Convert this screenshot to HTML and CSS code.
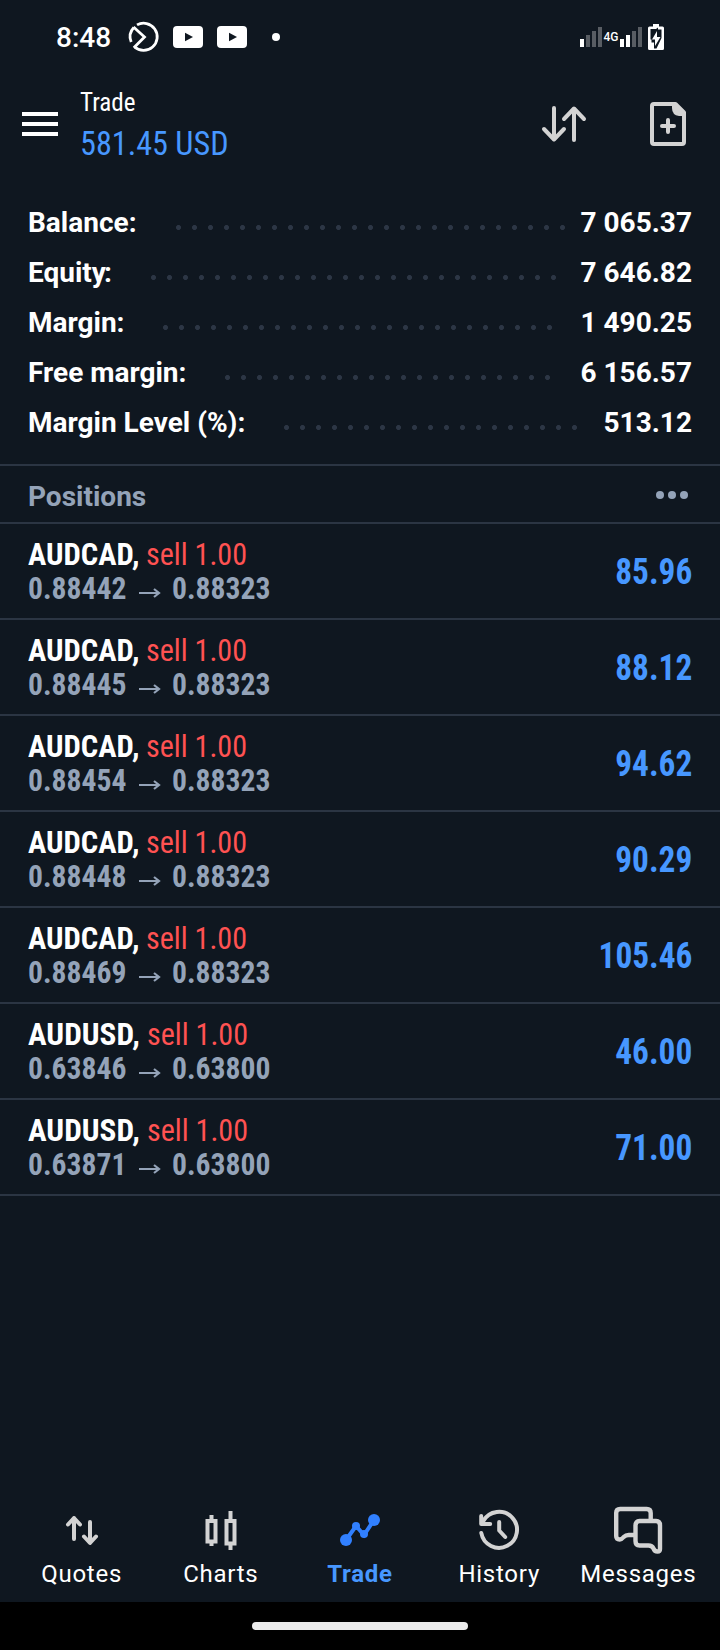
FILE: index.html
```html
<!DOCTYPE html>
<html lang="en">
<head>
<meta charset="utf-8">
<title>Trade</title>
<link rel="stylesheet" href="styles.css">
</head>
<body>
<div class="app">
  <div class="status">
    <span class="clock">8:48</span>
    <svg class="st-circle" width="30" height="30" viewBox="0 0 30 30" fill="none" stroke="#fff" stroke-width="2.8"><path d="M8 2.900A13.600 13.600 0 1 1 5.400 24.800M2.200 20A13.600 13.600 0 0 1 4.800 5.500"/><path d="M4.500 5L15.500 15L4.800 25.800"/></svg>
    <svg class="st-yt" width="30" height="22" viewBox="0 0 30 22"><rect width="30" height="22" rx="4" fill="#fff"/><path d="M12 6.800l8 4.200-8 4.200z" fill="#0f1720"/></svg>
    <svg class="st-yt" width="30" height="22" viewBox="0 0 30 22"><rect width="30" height="22" rx="4" fill="#fff"/><path d="M12 6.800l8 4.200-8 4.200z" fill="#0f1720"/></svg>
    <span class="st-dot"></span>
    <div class="st-right">
      <svg width="22" height="20" viewBox="0 0 22 20" fill="#585d63"><path fill="#fff" d="M0 12h4v8H0z"/><path d="M6 8h4v12H6zM12 4h4v16h-4zM18 0h4v20h-4z"/></svg>
      <span class="net">4G</span>
      <svg width="22" height="20" viewBox="0 0 22 20" fill="#585d63"><path fill="#fff" d="M0 12h4v8H0zM6 8h4v12H6z"/><path d="M12 4h4v16h-4zM18 0h4v20h-4z"/></svg>
      <svg class="batt" width="16" height="26" viewBox="0 0 16 26"><path fill="#fff" d="M5 0h6v2.500h3.500q1.500 0 1.500 1.500v20.500q0 1.500-1.500 1.500h-13q-1.500 0-1.500-1.500V4q0-1.500 1.500-1.500H5z"/><path fill="#0f1720" d="M2.500 5h5.500l2-1.500v2h3.500v8.500L8.500 24.500h-2.500V18.500H3.500v-3H2.500z"/><path fill="#fff" d="M9 7v6h3.500L7 22v-6.500H4z"/></svg>
    </div>
  </div>

  <header class="header">
    <svg class="menu" width="36" height="24" viewBox="0 0 36 24" fill="#fff"><path d="M0 0h36v4H0zM0 10h36v4H0zM0 20h36v4H0z"/></svg>
    <div class="titles">
      <div class="title cond">Trade</div>
      <div class="total cond">581.45 USD</div>
    </div>
    <svg class="sort" width="44" height="36" viewBox="0 0 44 36" fill="none" stroke="#d3d3d3" stroke-width="4" stroke-linecap="round" stroke-linejoin="round"><path d="M12 2v31M2 23l10 10.500L22 23M32 34V3M22 13L32 2.500 42 13"/></svg>
    <svg class="newdoc" width="36" height="44" viewBox="0 0 36 44"><path fill="none" stroke="#d3d3d3" stroke-width="4" stroke-linejoin="round" d="M4 2h21.500L34 10.500V40a2 2 0 0 1-2 2H4a2 2 0 0 1-2-2V4a2 2 0 0 1 2-2z"/><path fill="#d3d3d3" d="M22 2h5l7 7v5h-5q-7-1-7-8z"/><path d="M18 18v12M12 24h12" stroke="#d3d3d3" stroke-width="4" stroke-linecap="round"/></svg>
  </header>

  <section class="stats">
    <div class="stat"><span>Balance:</span><i class="dots" style="--n:25"></i><b>7 065.37</b></div>
    <div class="stat"><span>Equit<span class="kern">y</span>:</span><i class="dots" style="--n:26"></i><b>7 646.82</b></div>
    <div class="stat"><span>Margin:</span><i class="dots" style="--n:25"></i><b>1 490.25</b></div>
    <div class="stat"><span>Free margin:</span><i class="dots" style="--n:21"></i><b>6 156.57</b></div>
    <div class="stat"><span>Margin Level (%):</span><i class="dots" style="--n:19"></i><b>513.12</b></div>
  </section>

  <div class="section-head"><span>Positions</span><svg width="32" height="8" viewBox="0 0 32 8" fill="#94a3b8"><circle cx="4" cy="4" r="4"/><circle cx="16" cy="4" r="4"/><circle cx="28" cy="4" r="4"/></svg></div>

  <main class="positions">
    <div class="pos"><div><div class="l1 cond"><b>AUDCAD,</b><span>sell 1.00</span></div><div class="l2"><span class="cond">0.88442</span><svg class="arrow" viewBox="0 0 21 10"><path d="M0 5h19M15 1l5 4-5 4"/></svg><span class="cond">0.88323</span></div></div><div class="profit cond">85.96</div></div>
    <div class="pos"><div><div class="l1 cond"><b>AUDCAD,</b><span>sell 1.00</span></div><div class="l2"><span class="cond">0.88445</span><svg class="arrow" viewBox="0 0 21 10"><path d="M0 5h19M15 1l5 4-5 4"/></svg><span class="cond">0.88323</span></div></div><div class="profit cond">88.12</div></div>
    <div class="pos"><div><div class="l1 cond"><b>AUDCAD,</b><span>sell 1.00</span></div><div class="l2"><span class="cond">0.88454</span><svg class="arrow" viewBox="0 0 21 10"><path d="M0 5h19M15 1l5 4-5 4"/></svg><span class="cond">0.88323</span></div></div><div class="profit cond">94.62</div></div>
    <div class="pos"><div><div class="l1 cond"><b>AUDCAD,</b><span>sell 1.00</span></div><div class="l2"><span class="cond">0.88448</span><svg class="arrow" viewBox="0 0 21 10"><path d="M0 5h19M15 1l5 4-5 4"/></svg><span class="cond">0.88323</span></div></div><div class="profit cond">90.29</div></div>
    <div class="pos"><div><div class="l1 cond"><b>AUDCAD,</b><span>sell 1.00</span></div><div class="l2"><span class="cond">0.88469</span><svg class="arrow" viewBox="0 0 21 10"><path d="M0 5h19M15 1l5 4-5 4"/></svg><span class="cond">0.88323</span></div></div><div class="profit cond">105.46</div></div>
    <div class="pos"><div><div class="l1 cond usd"><b>AUDUSD,</b><span>sell 1.00</span></div><div class="l2"><span class="cond">0.63846</span><svg class="arrow" viewBox="0 0 21 10"><path d="M0 5h19M15 1l5 4-5 4"/></svg><span class="cond">0.63800</span></div></div><div class="profit cond">46.00</div></div>
    <div class="pos"><div><div class="l1 cond usd"><b>AUDUSD,</b><span>sell 1.00</span></div><div class="l2"><span class="cond">0.63871</span><svg class="arrow" viewBox="0 0 21 10"><path d="M0 5h19M15 1l5 4-5 4"/></svg><span class="cond">0.63800</span></div></div><div class="profit cond">71.00</div></div>
  </main>

  <nav class="tabs">
    <div class="tab"><svg width="48" height="48" viewBox="0 0 48 48" fill="none" stroke="#d3d3d3" stroke-width="4" stroke-linecap="round" stroke-linejoin="round"><path d="M16 32V11M10 17.500L16 11l6 6.500M32 15v20M26 29.500l6 6.500 6-6.500"/></svg><span>Quotes</span></div>
    <div class="tab"><svg width="48" height="48" viewBox="0 0 48 48" fill="none" stroke="#d3d3d3" stroke-width="4"><path d="M10.500 14h8v20.500h-8zM14.500 8v5M14.500 35v4M29.500 14h8v22.500h-8zM33.500 4v9M33.500 37v6"/></svg><span>Charts</span></div>
    <div class="tab active"><svg width="48" height="48" viewBox="0 0 48 48" fill="#3180ff"><path d="M10 33L20 19l8 9L38 13" fill="none" stroke="#3180ff" stroke-width="4"/><circle cx="10" cy="33" r="6"/><circle cx="20" cy="19" r="4"/><circle cx="28" cy="27" r="4"/><circle cx="38" cy="13" r="6"/></svg><span>Trade</span></div>
    <div class="tab"><svg width="48" height="48" viewBox="0 0 48 48" fill="none" stroke="#d3d3d3" stroke-width="4" stroke-linecap="round" stroke-linejoin="round"><path d="M6.300 26a18 18 0 1 0 2-12M6.200 9v8h9"/><path d="M24.200 15v8.500l6 6.500"/></svg><span>History</span></div>
    <div class="tab"><svg width="48" height="48" viewBox="0 0 48 48" fill="none" stroke="#d3d3d3" stroke-width="4.400" stroke-linecap="round" stroke-linejoin="round"><path d="M36.700 12V6q0-4-4-4H6.200Q2.200 2 2.200 6V29q0 3.500 3.500 3.500 2 0 4-2.500 2-2 5-2h5"/><path d="M25.500 14h16.500q4 0 4 4.500V42q0 2.500-2.500 2.500-3 0-4-3-1.500-3-5-3h-9q-4 0-4-4.500V18.500q0-4.500 4-4.500z"/></svg><span>Messages</span></div>
  </nav>
  <div class="sysbar"><div class="pill"></div></div>
</div>
</body>
</html>
```
FILE: styles.css
```css
* { box-sizing: border-box; }
body { margin: 0; background: #0f1720; color: #fff; font-family: Roboto, "Noto Sans", sans-serif; }
.app { width: 720px; height: 1650px; display: flex; flex-direction: column; overflow: hidden; }
svg { display: block; flex: none; overflow: visible; }
.cond { font-family: "Roboto Condensed", Roboto, sans-serif; font-stretch: 75%; }

.status { height: 74px; padding: 0 56px; display: flex; align-items: center; }
.clock { font-size: 28px; font-weight: 500; width: 73px; line-height: 30px; padding-top: 1px; }
.st-yt { margin-left: 14px; }
.st-dot { width: 8px; height: 8px; border-radius: 50%; background: #fff; margin-left: 25px; }
.st-right { margin-left: auto; display: flex; align-items: center; }
.net { width: 18px; text-align: center; font-size: 12px; font-weight: 500; line-height: 14px; }
.batt { margin-left: 6px; }

.header { height: 116px; display: flex; padding-left: 22px; }
.menu { margin-top: 38px; }
.titles { width: 300px; margin-left: 22px; }
.title { font-size: 26px; line-height: 30px; padding-top: 13px; height: 47px; transform: scaleX(.965); transform-origin: 0 0; }
.total { font-size: 34px; line-height: 40px; color: #4797ff; margin-top: 2px; transform: scaleX(.947); transform-origin: 0 0; }
.sort { margin: 32px 0 0 162px; }
.newdoc { margin: 28px 0 0 64px; }

.stats { height: 274px; padding: 8px 28px 0; }
.stat { height: 50px; display: flex; align-items: center; font-size: 28px; font-weight: 700; line-height: 50px; }
.stat b { font-weight: 700; margin-left: auto; }
.kern { letter-spacing: -2px; }
.dots { height: 5px; margin: 9px 0 0 39px; width: calc(var(--n) * 16px); background: radial-gradient(circle at 2.5px 2.5px, #2c3645 2.1px, transparent 2.9px) 0 0 / 16px 5px repeat-x; }

.section-head { height: 60px; border-top: 2px solid #2b3543; border-bottom: 2px solid #2b3543; padding: 2px 32px 0 28px; display: flex; justify-content: space-between; align-items: center; color: #94a3b8; font-size: 28px; font-weight: 700; }
.section-head span { padding-top: 2px; }

.pos { height: 96px; border-bottom: 2px solid #2b3543; padding: 13px 28px 0; display: flex; justify-content: space-between; }
.l1 { display: flex; font-size: 32px; line-height: 34px; }
.l1 b { width: 117.5px; font-weight: 700; white-space: nowrap; transform: scaleX(.957); transform-origin: 0 0; }
.l1 span { color: #ff5252; white-space: nowrap; transform: scaleX(.94); transform-origin: 0 0; }
.l1.usd b { width: 118.5px; transform: scaleX(.975); }
.l2 { display: flex; font-size: 32px; line-height: 34px; font-weight: 700; color: #94a3b8; }
.l2 span { width: 98px; transform: scaleX(.925); transform-origin: 0 0; }
.arrow { width: 21px; height: 10px; margin: 17px 12px 0 13px; fill: none; stroke: #94a3b8; stroke-width: 2.2; }
.profit { font-size: 36px; line-height: 70px; font-weight: 700; color: #4797ff; transform: scaleX(.925); transform-origin: 100% 0; }

.tabs { margin-top: auto; height: 120px; display: flex; justify-content: space-between; padding: 0 12px; }
.tab { width: 140px; display: flex; flex-direction: column; align-items: center; padding-top: 25px; }
.tab span { font-size: 24px; letter-spacing: .75px; line-height: 28px; margin-top: 5px; }
.tab.active span { color: #4797ff; font-weight: 700; }
.sysbar { height: 48px; background: #000; display: flex; justify-content: center; padding-top: 20px; }
.pill { width: 216px; height: 8px; border-radius: 4px; background: #ebebeb; }
```
